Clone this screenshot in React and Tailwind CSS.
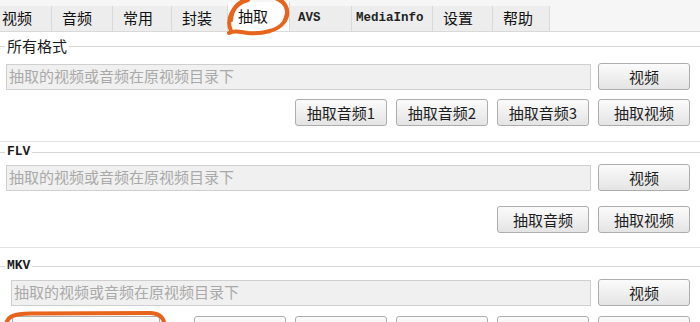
import React from 'react';

const tabs = [
    { label: '视频', w: 52, pad: 'pl-[2px]' },
    { label: '音频', w: 61, pad: 'pl-[10px]' },
    { label: '常用', w: 59, pad: 'pl-[10px]' },
    { label: '封装', w: 56, pad: 'pl-[10px]' },
    { label: '抽取', w: 62, pad: 'pl-[10px]', active: true },
    { label: 'AVS', w: 62, pad: 'pl-[8px]', mono: true },
    { label: 'MediaInfo', w: 81, pad: 'pl-[4px]', mono: true },
    { label: '设置', w: 60, pad: 'pl-[10px]' },
    { label: '帮助', w: 57, pad: 'pl-[10px]' },
];

const placeholder = '抽取的视频或音频在原视频目录下';

function Btn({ children, className = '' }) {
    return (
        <button className={`w-[92px] h-[27px] shrink-0 rounded-[3px] border border-[#adadad] bg-gradient-to-b from-[#fbfbfb] to-[#e4e4e4] text-[15px] text-[#1e1e1e] leading-none font-['Noto_Sans_CJK_SC',sans-serif] ${className}`}>
            {children}
        </button>
    );
}

function GroupHeader({ label, mono }) {
    return (
        <div className="h-[20px] flex items-center">
            <div className="w-[5px] h-px bg-[#d6d6d6]" />
            <span className={mono
                ? "px-[2px] text-[13px] font-bold text-[#1a1a1a] font-['Liberation_Mono',monospace]"
                : "px-[2px] text-[15px] text-[#1a1a1a] font-['Noto_Sans_CJK_SC',sans-serif]"}>
                {label}
            </span>
            <div className="flex-1 h-px bg-[#d6d6d6]" />
        </div>
    );
}

function PathRow({ indent = 'pl-[6px]' }) {
    return (
        <div className={`flex items-center gap-[7px] pr-[10px] ${indent}`}>
            <div className="flex-1 h-[26px] bg-[#f0f0f0] border border-[#cfcfcf] flex items-center px-[2px] text-[15px] text-[#a9a9a9] font-['Noto_Sans_CJK_SC',sans-serif]">
                {placeholder}
            </div>
            <Btn>视频</Btn>
        </div>
    );
}

export default function App() {
    return (
        <div className="relative w-[700px] h-[322px] overflow-hidden bg-white select-none">
            {/* Tab strip */}
            <div className="h-[32px] flex items-end bg-[#f6f6f6] border-b border-[#d9d9d9]">
                {tabs.map((t) => (
                    <div
                        key={t.label}
                        style={{ width: t.w }}
                        className={`${t.active ? 'h-[29px] bg-white' : 'h-[25px] bg-[#ededed]'} shrink-0 border-r border-[#d9d9d9] flex items-center ${t.pad} ${t.mono
                            ? "text-[12.5px] font-bold text-[#222] font-['Liberation_Mono',monospace]"
                            : "text-[15px] text-[#111] font-['Noto_Sans_CJK_SC',sans-serif]"}`}
                    >
                        {t.label}
                    </div>
                ))}
            </div>

            {/* 所有格式 */}
            <div className="pt-[4px]">
                <GroupHeader label="所有格式" />
            </div>
            <div className="mt-[7px]">
                <PathRow />
            </div>
            <div className="mt-[9px] flex justify-end gap-[9px] pr-[10px]">
                <Btn>抽取音频1</Btn>
                <Btn>抽取音频2</Btn>
                <Btn>抽取音频3</Btn>
                <Btn>抽取视频</Btn>
            </div>
            <div className="mt-[15px] h-px bg-[#e2e2e2]" />

            {/* FLV */}
            <GroupHeader label="FLV" mono />
            <div className="mt-[2px]">
                <PathRow />
            </div>
            <div className="mt-[15px] flex justify-end gap-[9px] pr-[10px]">
                <Btn>抽取音频</Btn>
                <Btn>抽取视频</Btn>
            </div>
            <div className="mt-[14px] h-px bg-[#e2e2e2]" />

            {/* MKV */}
            <div className="mt-[8px]">
                <GroupHeader label="MKV" mono />
            </div>
            <div className="mt-[3px]">
                <PathRow indent="pl-[11px]" />
            </div>
            <div className="mt-[10px] flex items-start pr-[10px]">
                <Btn className="ml-[12px] w-[148px]">抽取全部字幕轨道</Btn>
                <div className="flex-1" />
                <div className="flex gap-[9px]">
                    <Btn>抽取字幕1</Btn>
                    <Btn>抽取字幕2</Btn>
                    <Btn>抽取字幕3</Btn>
                    <Btn>抽取字幕4</Btn>
                    <Btn>抽取字幕5</Btn>
                </div>
            </div>

            {/* hand-drawn annotations */}
            <svg className="absolute left-0 top-0 pointer-events-none" width="700" height="322">
                <path
                    d="M231 31 C 226 20, 232 4, 248 0 M 272 -3 C 288 0, 290 14, 284 22 C 278 31, 262 34, 248 33 C 240 32, 234 30, 229 33"
                    fill="none" stroke="#e8641c" strokeWidth="4" strokeLinecap="round"
                />
                <path d="M231 20 C 232 8, 240 -2, 260 -4 C 280 -5, 292 6, 285 20" fill="none" stroke="#e8641c" strokeWidth="4" strokeLinecap="round" />
                <path
                    d="M6 324 C 8 316, 14 314, 30 313.5 L 150 313 C 160 313, 164 318, 165 326"
                    fill="none" stroke="#e8641c" strokeWidth="4" strokeLinecap="round"
                />
            </svg>
        </div>
    );
}
